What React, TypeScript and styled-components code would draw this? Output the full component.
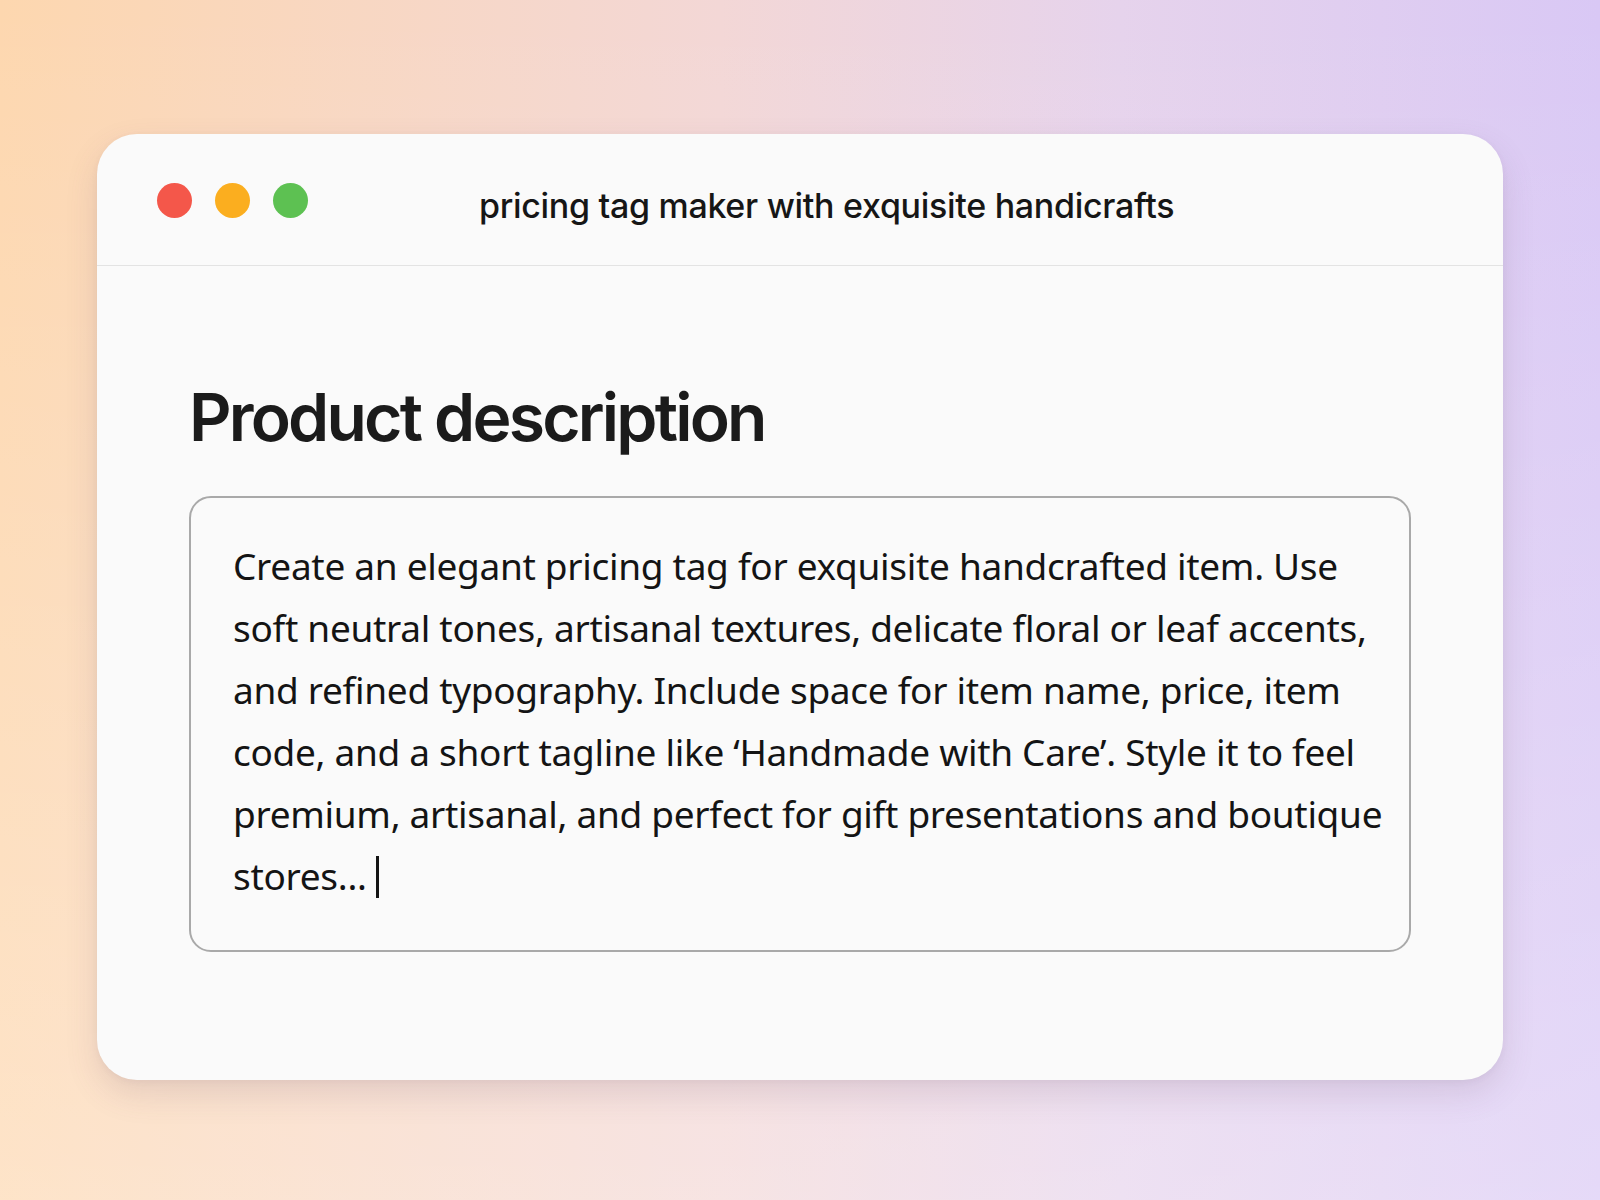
import React from 'react';
import styled, { createGlobalStyle } from 'styled-components';

const GlobalStyle = createGlobalStyle`
    html, body {
        margin: 0;
        padding: 0;
    }
    body {
        font-family: "Inter", "Noto Sans", sans-serif;
        -webkit-font-smoothing: antialiased;
    }
`;

const dots = ['#F4574A', '#FBAE1F', '#5DC152'];

const description =
    'Create an elegant pricing tag for exquisite handcrafted item. Use soft neutral tones, artisanal textures, delicate floral or leaf accents, and refined typography. Include space for item name, price, item code, and a short tagline like \u2018Handmade with Care\u2019. Style it to feel premium, artisanal, and perfect for gift presentations and boutique stores...';

export default function App() {
    return (
        <>
            <GlobalStyle />
            <Page>
                <Window>
                    <TitleBar>
                        <Dots>
                            {dots.map(color => (
                                <Dot key={color} color={color} />
                            ))}
                        </Dots>
                        <Title>pricing tag maker with exquisite handicrafts</Title>
                    </TitleBar>
                    <Content>
                        <Heading>Product description</Heading>
                        <TextBox>
                            <Text>
                                {description} <Caret />
                            </Text>
                        </TextBox>
                    </Content>
                </Window>
            </Page>
        </>
    );
}

const Page = styled.div`
    box-sizing: border-box;
    width: 100%;
    min-height: 1200px;
    padding: 134px 97px 0;
    background:
        linear-gradient(to bottom, rgba(255, 255, 255, 0) 0%, rgba(255, 255, 255, 0.32) 100%),
        linear-gradient(to right, #FDD7AF 0%, #F3D7D6 45%, #E6D3EC 70%, #D9C8F5 100%);
`;

const Window = styled.div`
    width: 1406px;
    height: 946px;
    background: #FAFAFA;
    border-radius: 40px;
    box-shadow: 0 14px 32px rgba(110, 80, 110, 0.16), 0 2px 6px rgba(110, 80, 110, 0.06);
    display: flex;
    flex-direction: column;
    overflow: hidden;
`;

const TitleBar = styled.div`
    height: 131px;
    flex-shrink: 0;
    display: flex;
    align-items: center;
    padding-left: 60px;
    border-bottom: 1.5px solid #E3E3E3;
`;

const Dots = styled.div`
    display: flex;
    gap: 23px;
    margin-top: 2px;
`;

const Dot = styled.span<{ color: string }>`
    width: 35px;
    height: 35px;
    border-radius: 50%;
    background: ${p => p.color};
`;

const Title = styled.h1`
    margin: 12px 0 0 171px;
    font-family: "Inter", sans-serif;
    font-size: 34px;
    font-weight: 500;
    letter-spacing: -0.3px;
    color: #161616;
`;

const Content = styled.div`
    display: flex;
    flex-direction: column;
    padding: 118px 92px 0;
`;

const Heading = styled.h2`
    margin: 0 0 46px;
    font-family: "Inter", sans-serif;
    font-size: 66px;
    line-height: 1;
    font-weight: 600;
    letter-spacing: -2.8px;
    color: #1B1B1B;
`;

const TextBox = styled.div`
    box-sizing: border-box;
    height: 456px;
    border: 2px solid #A9A9A9;
    border-radius: 22px;
    padding: 37px 24px 0 42px;
`;

const Text = styled.p`
    margin: 0;
    font-family: "Noto Sans", sans-serif;
    font-size: 37px;
    line-height: 62px;
    letter-spacing: -0.3px;
    color: #141414;
`;

const Caret = styled.span`
    display: inline-block;
    width: 3px;
    height: 42px;
    background: #141414;
    vertical-align: -8px;
`;
